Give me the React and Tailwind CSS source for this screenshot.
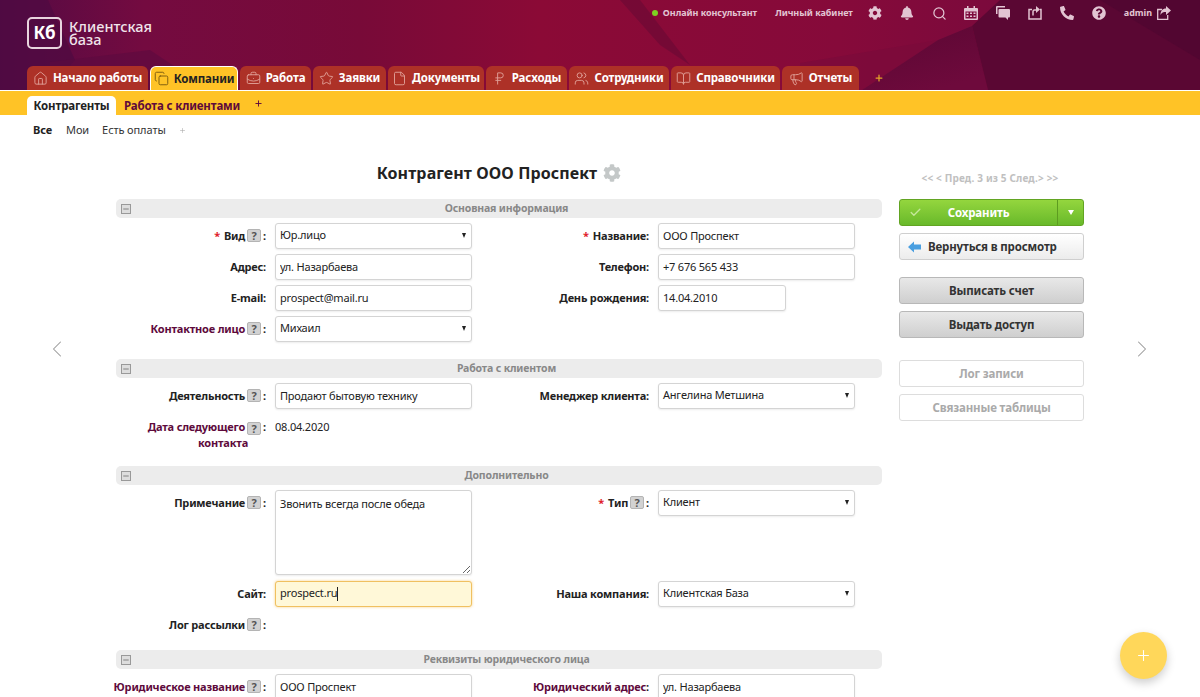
import {
  House,
  Copy,
  BriefcaseBusiness,
  Star,
  File,
  RussianRuble,
  Users,
  BookOpen,
  Megaphone,
  Search,
  ChevronLeft,
  ChevronRight,
  Check,
  Plus,
  Minus,
} from "lucide-react";
import { FaCog, FaBell, FaPhone, FaQuestionCircle } from "react-icons/fa";

const FONT = "font-['Noto_Sans','Open_Sans',sans-serif]";

const tabs = [
  { name: "Начало работы", icon: House, width: "w-[121px]" },
  { name: "Компании", icon: Copy, width: "w-[88px]", active: true },
  { name: "Работа", icon: BriefcaseBusiness, width: "w-[71px]" },
  { name: "Заявки", icon: Star, width: "w-[73px]" },
  { name: "Документы", icon: File, width: "w-[96px]" },
  { name: "Расходы", icon: RussianRuble, width: "w-[81px]" },
  { name: "Сотрудники", icon: Users, width: "w-[100px]" },
  { name: "Справочники", icon: BookOpen, width: "w-[109px]" },
  { name: "Отчеты", icon: Megaphone, width: "w-[77px]" },
];

const CalendarIcon = () => (
  <svg width="14" height="14" viewBox="0 0 14 14" className="mr-[18px]" fill="currentColor">
    <rect x="3" y="0" width="1.5" height="3" />
    <rect x="9.5" y="0" width="1.5" height="3" />
    <path d="M1 2h12a1 1 0 0 1 1 1v10a1 1 0 0 1-1 1H1a1 1 0 0 1-1-1V3a1 1 0 0 1 1-1zm.5 3.5V12.5h11V5.5z" />
    <path d="M2.5 6.5h2v1.5h-2zM6 6.5h2v1.5H6zM9.5 6.5h2v1.5h-2zM2.5 9.5h2V11h-2zM6 9.5h2V11H6zM9.5 9.5h2V11h-2z" />
  </svg>
);

const ChatIcon = () => (
  <svg width="14" height="14" viewBox="0 0 14 14" className="mr-[18px]" fill="currentColor">
    <path d="M1 0h8v1.500H1.500V8H0V1a1 1 0 0 1 1-1z" />
    <path d="M3.500 3H13a1 1 0 0 1 1 1v6.500a1 1 0 0 1-1 1h-1v2.500l-2.500-2.500h-6a1 1 0 0 1-1-1V4a1 1 0 0 1 1-1z" />
  </svg>
);

const TrayIcon = () => (
  <svg
    width="14"
    height="14"
    viewBox="0 0 14 14"
    className="mr-[18px]"
    fill="none"
    stroke="currentColor"
    strokeWidth="1.5"
  >
    <path d="M4 3.500H1v9.500h12V3.500h-1" />
    <path d="M5 9.500V5.500a1.500 1.500 0 0 1 1.500-1.500H9" />
    <path d="M8 0l4 3.500-4 3.500z" fill="currentColor" stroke="none" />
  </svg>
);

const LogoutIcon = () => (
  <svg width="14" height="14" viewBox="0 0 14 14" fill="none" stroke="currentColor">
    <path d="M5 3.500H.7v9.800h10V9" strokeWidth="1.300" />
    <path d="M14 4.500L9 0v2.500C5.500 2.500 3.500 5 3.500 9c1-2.500 3-3 5.500-3v3z" fill="currentColor" stroke="none" />
  </svg>
);

const BackArrow = () => (
  <svg width="13" height="12" viewBox="0 0 13 12">
    <path d="M0 6l6-5.500V3.500h7v5H6v3z" fill="#4a9fe0" />
  </svg>
);

const Help = () => (
  <span className="mx-[2px] inline-flex h-[13px] w-[14px] shrink-0 items-center justify-center rounded-[2px] border border-[#b4b4b4] bg-[#d2d2d2] align-[-2px] text-[11px] font-bold leading-none tracking-normal text-[#555]">
    ?
  </span>
);

const Label = ({ text, required, link, help, className = "" }) => (
  <div
    className={`flex shrink-0 items-center justify-end whitespace-nowrap pb-px text-[11px] font-bold leading-[15px] tracking-[-0.2px] ${
      link ? "text-[#5e0a3c]" : "text-[#222]"
    } ${className}`}
  >
    {required && <span className="mr-1 text-[#e0202a]">*</span>}
    <span>{text}</span>
    {help && <Help />}
    <span className="text-[#222]">:</span>
  </div>
);

const inputClass =
  "h-[26px] rounded-[3px] border border-[#d4d4d4] bg-white px-[4px] pb-px text-[11px] tracking-[-0.2px] text-[#222] shadow-[0_1px_2px_rgba(0,0,0,0.08)] outline-none";

const TextInput = ({ value, className = "w-[197px]" }) => (
  <input defaultValue={value} className={`${inputClass} ${className}`} />
);

const Select = ({ value }) => (
  <div className={`${inputClass} flex w-[197px] items-center justify-between pr-[5px]`}>
    <span>{value}</span>
    <span className="h-0 w-0 border-x-[2.5px] border-t-[5px] border-x-transparent border-t-[#222]" />
  </div>
);

const Field = ({ label, children, ...rest }) => (
  <div className="flex items-center">
    <Label text={label} className="mr-[9px] w-[150px]" {...rest} />
    {children}
  </div>
);

const Section = ({ title, className = "" }) => (
  <div className={`flex h-[19px] items-center rounded-[5px] bg-[#ececec] ${className}`}>
    <span className="ml-[5px] flex h-[10px] w-[10px] items-center justify-center border border-[#999] bg-[#ddd] text-[#555]">
      <Minus size={8} strokeWidth={2} />
    </span>
    <span className="flex-1 pt-px text-center text-[10.5px] font-bold tracking-[-0.15px] text-[#888]">
      {title}
    </span>
  </div>
);

const SideButton = ({ children, className = "" }) => (
  <button
    className={`flex h-[27px] w-[185px] items-center justify-center rounded-[3px] border text-[11.5px] font-bold tracking-[-0.15px] ${className}`}
  >
    {children}
  </button>
);

const HeaderArt = () => (
  <svg
    className="absolute inset-0 h-[90px] w-[1200px]"
    viewBox="0 0 1200 90"
    preserveAspectRatio="none"
  >
    <defs>
      <linearGradient id="hdr" x1="0" y1="0" x2="1" y2="0">
        <stop offset="0" stopColor="#530a44" />
        <stop offset="0.12" stopColor="#740b40" />
        <stop offset="0.3" stopColor="#780a38" />
        <stop offset="0.45" stopColor="#8b0a36" />
        <stop offset="0.7" stopColor="#860a3a" />
        <stop offset="0.82" stopColor="#7c0a3c" />
        <stop offset="1" stopColor="#6c0a3a" />
      </linearGradient>
      <linearGradient id="fold" x1="0" y1="0" x2="0.6" y2="1">
        <stop offset="0" stopColor="#5a0733" />
        <stop offset="1" stopColor="#6e0a3c" />
      </linearGradient>
    </defs>
    <rect width="1200" height="90" fill="url(#hdr)" />
    <polygon points="0,0 48,0 75,60 50,90 0,90" fill="#4f0a42" opacity="0.7" />
    <polygon points="50,62 150,50 210,90 50,90" fill="#5c0a40" opacity="0.6" />
    <polygon points="620,0 640,0 690,65 660,45" fill="#5d0832" opacity="0.45" />
    <polygon points="800,63 938,40 862,90 800,90" fill="#7a0a3a" opacity="0.7" />
    <polygon points="938,40 972,26 988,90 862,90" fill="url(#fold)" />
    <polygon points="1000,0 1200,0 1200,90 988,90 972,26" fill="#5a0733" />
    <polygon points="1100,0 1200,0 1200,60" fill="#520631" />
  </svg>
);

const App = () => {
  return (
    <div className={`relative h-[697px] w-[1200px] overflow-hidden bg-white ${FONT}`}>
      <header className="relative h-[91px] border-b border-white">
        <HeaderArt />
        <div className="relative flex h-[66px] items-start justify-between pl-[27px] pr-[29px]">
          <div className="mt-[17px] flex items-center gap-[7px]">
            <div className="flex h-[32px] w-[35px] items-center justify-center rounded-[5px] border-2 border-[#e8d4de] text-[17px] font-bold text-white">
              Кб
            </div>
            <div className="text-[14.5px] font-medium leading-[13px] text-[#f0e4ea]">
              Клиентская
              <br />
              база
            </div>
          </div>
          <div className="mt-[6px] flex h-[14px] items-center text-[9px] font-bold tracking-[-0.05px] text-[#e2c4d2]">
            <span className="mr-[5px] h-[6px] w-[6px] rounded-full bg-[#7ed321]" />
            <span className="mr-[18px]">Онлайн консультант</span>
            <span className="mr-[15px]">Личный кабинет</span>
            <FaCog size={14} className="mr-[18px]" />
            <FaBell size={14} className="mr-[18px]" />
            <Search size={15} strokeWidth={2} className="mr-[17px]" />
            <CalendarIcon />
            <ChatIcon />
            <TrayIcon />
            <FaPhone size={14} className="mr-[18px] rotate-90" />
            <FaQuestionCircle size={14} className="mr-[18px]" />
            <span className="mr-[5px]">admin</span>
            <LogoutIcon />
          </div>
        </div>
        <nav className="relative flex h-[24px] items-end gap-[2px] pl-[27px]">
          {tabs.map(({ name, icon: Icon, width, active }) => (
            <div
              key={name}
              className={`flex h-[24px] ${width} items-center justify-center gap-[5px] rounded-t-[6px] text-[11.5px] font-bold tracking-[-0.15px] ${
                active
                  ? "border border-b-0 border-white bg-[#ffc326] text-[#222]"
                  : "bg-[#ad3127] text-white"
              }`}
            >
              <Icon
                size={15}
                strokeWidth={1.5}
                className={active ? "text-[#7a5a10]" : "text-[#e0a097]"}
              />
              <span>{name}</span>
            </div>
          ))}
          <Plus size={10} strokeWidth={3} className="mb-[7px] ml-[13px] text-[#e3a32a]" />
        </nav>
      </header>

      <div className="flex h-[24px] items-end bg-[#ffc326] pl-[27px] text-[11.5px] font-bold tracking-[-0.15px]">
        <div className="flex h-[19px] w-[89px] items-center justify-center rounded-t-[5px] bg-white text-[#222]">
          Контрагенты
        </div>
        <div className="ml-[8px] flex h-[19px] items-center text-[#5e0a3c]">Работа с клиентами</div>
        <Plus size={9} strokeWidth={2.5} className="mb-[7px] ml-[14px] text-[#5e0a3c]" />
      </div>

      <div className="flex h-[30px] items-center pl-[33px] text-[11px] tracking-[-0.1px] text-[#333]">
        <span className="font-bold text-[#222]">Все</span>
        <span className="ml-[14px]">Мои</span>
        <span className="ml-[13px]">Есть оплаты</span>
        <Plus size={7} strokeWidth={2} className="ml-[13px] text-[#aaa]" />
      </div>

      <div className="flex">
        <div className="flex w-[116px] shrink-0 justify-start pl-[43px] pt-[190px]">
          <ChevronLeft size={28} strokeWidth={0.9} className="text-[#999]" />
        </div>

        <main className="w-[766px] shrink-0">
          <h1 className="flex h-[54px] items-center justify-center gap-[6px] pt-[2px] text-[16px] font-bold tracking-[0.1px] text-[#222]">
            Контрагент ООО Проспект
            <FaCog size={18} className="text-[#c4c8c8]" />
          </h1>

          <Section title="Основная информация" />
          <div className="mt-[5px] grid grid-cols-[383px_383px] gap-y-[5px]">
            <Field label="Вид" required help>
              <Select value="Юр.лицо" />
            </Field>
            <Field label="Название" required>
              <TextInput value="ООО Проспект" />
            </Field>
            <Field label="Адрес">
              <TextInput value="ул. Назарбаева" />
            </Field>
            <Field label="Телефон">
              <TextInput value="+7 676 565 433" />
            </Field>
            <Field label="E-mail">
              <TextInput value="prospect@mail.ru" />
            </Field>
            <Field label="День рождения">
              <TextInput value="14.04.2010" className="w-[128px]" />
            </Field>
            <Field label="Контактное лицо" link help>
              <Select value="Михаил" />
            </Field>
          </div>

          <Section title="Работа с клиентом" className="mt-[17px]" />
          <div className="mt-[5px] grid grid-cols-[383px_383px]">
            <Field label="Деятельность" help>
              <TextInput value="Продают бытовую технику" />
            </Field>
            <Field label="Менеджер клиента">
              <Select value="Ангелина Метшина" />
            </Field>
          </div>
          <div className="mt-[10px] flex h-[37px] items-start">
            <div className="mr-[9px] w-[150px] shrink-0 text-right text-[11px] font-bold leading-[15px] tracking-[-0.2px] text-[#5e0a3c]">
              Дата следующего
              <Help />
              <span className="text-[#222]">:</span>
              <div className="pr-[18px]">контакта</div>
            </div>
            <span className="text-[11px] leading-[15px] tracking-[-0.2px] text-[#222]">
              08.04.2020
            </span>
          </div>

          <Section title="Дополнительно" className="mt-[10px]" />
          <div className="mt-[5px] grid grid-cols-[383px_383px]">
            <div className="flex items-start">
              <Label text="Примечание" help className="mr-[9px] mt-[5px] w-[150px]" />
              <textarea
                defaultValue="Звонить всегда после обеда"
                className="h-[85px] w-[197px] rounded-[3px] border border-[#d4d4d4] bg-white px-[4px] py-[5px] text-[11px] leading-[15px] tracking-[-0.2px] text-[#222] shadow-[0_1px_2px_rgba(0,0,0,0.08)] outline-none"
              />
            </div>
            <div className="flex items-start">
              <Label text="Тип" required help className="mr-[9px] mt-[5px] w-[150px]" />
              <Select value="Клиент" />
            </div>
          </div>
          <div className="mt-[6px] grid grid-cols-[383px_383px]">
            <Field label="Сайт">
              <div className="flex h-[26px] w-[197px] items-center rounded-[3px] border border-[#f0c060] bg-[#fff8d8] px-[4px] pb-px text-[11px] tracking-[-0.2px] text-[#222] shadow-[0_0_3px_rgba(240,180,60,0.6)]">
                prospect.ru
                <span className="h-[14px] w-px bg-[#222]" />
              </div>
            </Field>
            <Field label="Наша компания">
              <Select value="Клиентская База" />
            </Field>
          </div>
          <div className="mt-[10px] h-[16px]">
            <Label text="Лог рассылки" help className="w-[150px]" />
          </div>

          <Section title="Реквизиты юридического лица" className="mt-[17px]" />
          <div className="mt-[5px] grid grid-cols-[383px_383px]">
            <Field label="Юридическое название" link help>
              <TextInput value="ООО Проспект" />
            </Field>
            <Field label="Юридический адрес" link>
              <TextInput value="ул. Назарбаева" />
            </Field>
          </div>
        </main>

        <aside className="ml-[17px] flex w-[185px] shrink-0 flex-col">
          <div className="flex h-[54px] items-center justify-center pr-[3px] pt-[12px] text-[10px] font-bold tracking-[0.15px] text-[#c0c0c0]">
            {"<< < Пред. 3 из 5 След.> >>"}
          </div>
          <div className="flex h-[27px] w-[185px] overflow-hidden rounded-[3px] border border-[#62a422] bg-gradient-to-b from-[#94d63e] to-[#68b92a] text-[11.5px] font-bold tracking-[-0.15px] text-white">
            <div className="relative flex flex-1 items-center justify-center">
              <Check size={13} strokeWidth={2.5} className="absolute left-[9px] text-[#c5e89a]" />
              Сохранить
            </div>
            <div className="flex w-[26px] items-center justify-center border-l border-[#5d9c20]">
              <span className="h-0 w-0 border-x-[3px] border-t-[5px] border-x-transparent border-t-white" />
            </div>
          </div>
          <SideButton className="mt-[7px] justify-start gap-[7px] border-[#cfcfcf] bg-gradient-to-b from-white to-[#ececec] pl-[8px] text-[#333]">
            <BackArrow />
            Вернуться в просмотр
          </SideButton>
          <SideButton className="mt-[17px] border-[#b8b8b8] bg-gradient-to-b from-[#e8e8e8] to-[#cfcfcf] text-[#333]">
            Выписать счет
          </SideButton>
          <SideButton className="mt-[7px] border-[#b8b8b8] bg-gradient-to-b from-[#e8e8e8] to-[#cfcfcf] text-[#333]">
            Выдать доступ
          </SideButton>
          <SideButton className="mt-[22px] border-[#ddd] bg-white text-[#aaa]">Лог записи</SideButton>
          <SideButton className="mt-[7px] border-[#ddd] bg-white text-[#aaa]">
            Связанные таблицы
          </SideButton>
        </aside>

        <div className="flex flex-1 justify-end pr-[44px] pt-[190px]">
          <ChevronRight size={28} strokeWidth={0.9} className="text-[#999]" />
        </div>
      </div>

      <button className="absolute left-[1120px] top-[632px] flex h-[47px] w-[47px] items-center justify-center rounded-full bg-[#ffd75a] text-white shadow-[0_4px_10px_rgba(0,0,0,0.2)]">
        <Plus size={17} strokeWidth={1.5} />
      </button>
    </div>
  );
};

export default App;
